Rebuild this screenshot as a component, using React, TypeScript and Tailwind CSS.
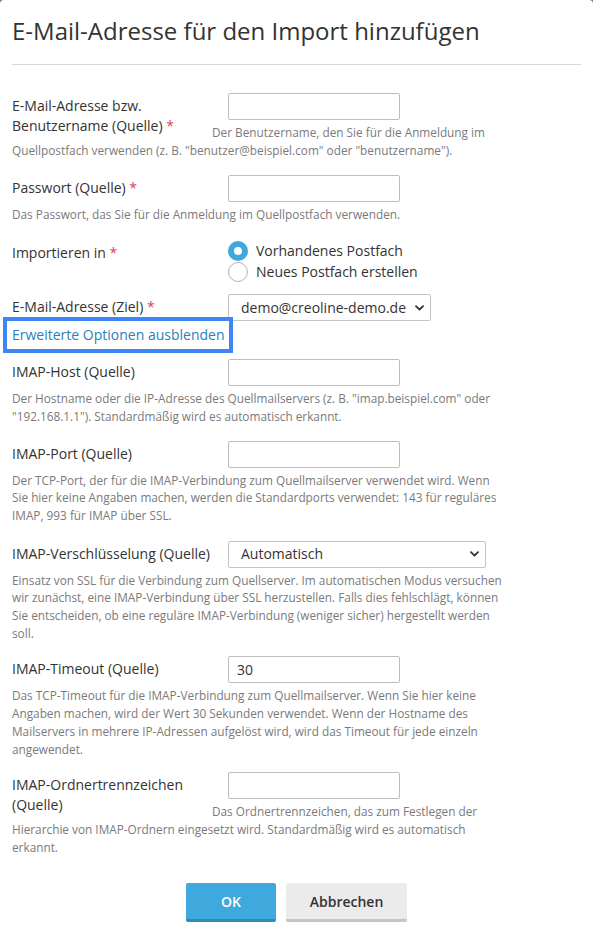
import React from "react";

const Req = () => <span className="text-[#d8435a]"> *</span>;

type RowProps = {
  label: React.ReactNode;
  required?: boolean;
  desc?: React.ReactNode;
  className?: string;
  labelClass?: string;
  children: React.ReactNode;
};

function Row({ label, required, desc, className, labelClass, children }: RowProps) {
  return (
    <div className={`flow-root ${className ?? "mb-4"}`}>
      <label className={`float-left w-[200px] pt-[3px] text-[14px] leading-5 text-[#333] ${labelClass ?? ""}`}>
        {label}
        {required && <Req />}
      </label>
      <div className="flow-root pl-4">{children}</div>
      {desc && (
        <p className="mt-1 max-w-[490px] text-[11.8px] leading-[17.7px] text-[#7a7a7a]">{desc}</p>
      )}
    </div>
  );
}

function TextInput({ value }: { value?: string }) {
  return (
    <input
      type="text"
      defaultValue={value}
      className="block h-[27px] w-[172px] rounded-[2px] border border-[#bdbdbd] bg-white px-2 text-[14px] text-[#333] outline-none"
    />
  );
}

function Chevron() {
  return (
    <svg width="9" height="6" viewBox="0 0 9 6" className="shrink-0">
      <path d="M1 1.2 L4.5 4.6 L8 1.2" fill="none" stroke="#333" strokeWidth="1.8" strokeLinecap="round" strokeLinejoin="round" />
    </svg>
  );
}

function FakeSelect({ value, width }: { value: string; width: string }) {
  return (
    <div
      className={`flex h-[27px] ${width} items-center justify-between rounded-[2px] border border-[#c4c4c4] bg-white pl-3 pr-[6px] text-[14px] text-[#333]`}
    >
      <span className="leading-5">{value}</span>
      <Chevron />
    </div>
  );
}

function Radio({ checked, label }: { checked?: boolean; label: string }) {
  return (
    <div className="flex h-[21px] items-center gap-2 text-[14px] text-[#333]">
      {checked ? (
        <span className="box-border h-5 w-5 shrink-0 rounded-full border-[6px] border-[#3fa9dd] bg-white" />
      ) : (
        <span className="box-border h-5 w-5 shrink-0 rounded-full border border-[#b3b3b3] bg-white" />
      )}
      <span className="leading-5">{label}</span>
    </div>
  );
}

export default function App() {
  return (
    <div className="bg-[#7a7a7a]">
      <div className="min-h-[939px] rounded-t-[4px] bg-white px-3 pt-4 pb-4 font-['Open_Sans',sans-serif]">
        <h1 className="text-[24px] leading-[30px] font-normal text-[#333]">
          E-Mail-Adresse für den Import hinzufügen
        </h1>
        <div className="mt-[18px] border-t border-[#d6d6de]" />

        <div className="mt-[28px]">
          <Row
            label="E-Mail-Adresse bzw. Benutzername (Quelle)"
            required
            desc={
              <>Der Benutzername, den Sie für die Anmeldung im Quellpostfach verwenden (z. B. "benutzer@beispiel.com" oder "benutzername").</>
            }
          >
            <TextInput />
          </Row>

          <Row
            label="Passwort (Quelle)"
            required
            desc="Das Passwort, das Sie für die Anmeldung im Quellpostfach verwenden."
          >
            <TextInput />
          </Row>

          <Row label="Importieren in" required className="mb-3">
            <Radio checked label="Vorhandenes Postfach" />
            <Radio label="Neues Postfach erstellen" />
          </Row>

          <Row label="E-Mail-Adresse (Ziel)" required className="mb-0">
            <FakeSelect value="demo@creoline-demo.de" width="w-[203px]" />
          </Row>

          <div className="mb-[10px] flex">
            <a
              href="#"
              className="-ml-[5px] inline-block px-[5px] py-1 text-[14px] leading-5 text-[#2a7fb8] ring-4 ring-[#3d86f4]"
            >
              Erweiterte Optionen ausblenden
            </a>
          </div>

          <Row
            label="IMAP-Host (Quelle)"
            className="mb-[15px]"
            desc={
              <>Der Hostname oder die IP-Adresse des Quellmailservers (z. B. "imap.beispiel.com" oder "192.168.1.1"). Standardmäßig wird es automatisch erkannt.</>
            }
          >
            <TextInput />
          </Row>

          <Row
            label="IMAP-Port (Quelle)"
            desc="Der TCP-Port, der für die IMAP-Verbindung zum Quellmailserver verwendet wird. Wenn Sie hier keine Angaben machen, werden die Standardports verwendet: 143 für reguläres IMAP, 993 für IMAP über SSL."
          >
            <TextInput />
          </Row>

          <Row
            label="IMAP-Verschlüsselung (Quelle)"
            labelClass="whitespace-nowrap"
            className="mb-[14px]"
            desc="Einsatz von SSL für die Verbindung zum Quellserver. Im automatischen Modus versuchen wir zunächst, eine IMAP-Verbindung über SSL herzustellen. Falls dies fehlschlägt, können Sie entscheiden, ob eine reguläre IMAP-Verbindung (weniger sicher) hergestellt werden soll."
          >
            <FakeSelect value="Automatisch" width="w-[258px]" />
          </Row>

          <Row
            label="IMAP-Timeout (Quelle)"
            className="mb-[14px]"
            desc="Das TCP-Timeout für die IMAP-Verbindung zum Quellmailserver. Wenn Sie hier keine Angaben machen, wird der Wert 30 Sekunden verwendet. Wenn der Hostname des Mailservers in mehrere IP-Adressen aufgelöst wird, wird das Timeout für jede einzeln angewendet."
          >
            <TextInput value="30" />
          </Row>

          <Row
            label="IMAP-Ordnertrennzeichen (Quelle)"
            className="mb-0"
            desc="Das Ordnertrennzeichen, das zum Festlegen der Hierarchie von IMAP-Ordnern eingesetzt wird. Standardmäßig wird es automatisch erkannt."
          >
            <TextInput />
          </Row>
        </div>

        <div className="mt-[27px] flex justify-center gap-[10px]">
          <button className="h-[39px] w-[90px] rounded-[2px] border-b-[3px] border-[#2e8cbc] bg-[#3fa9dd] text-[14px] font-semibold text-white">
            OK
          </button>
          <button className="h-[39px] w-[121px] rounded-[2px] border-b-[3px] border-[#c5c5c5] bg-[#ebebeb] text-[14px] font-semibold text-[#333]">
            Abbrechen
          </button>
        </div>
      </div>
    </div>
  );
}
